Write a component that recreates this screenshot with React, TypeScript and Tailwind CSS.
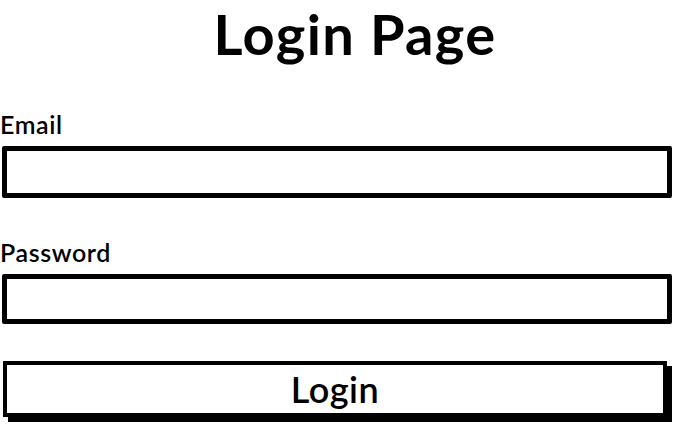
const font = { fontFamily: 'Lato, "Noto Sans", sans-serif' };

export default function App() {
  return (
    <div className="w-[674px] h-[424px] bg-white text-black overflow-hidden" style={font}>
      <h1 className="pl-[36px] text-center text-[56px] font-bold leading-[68px] tracking-[1.3px]">Login Page</h1>

      <form className="mt-[42px] flex flex-col" onSubmit={(e) => e.preventDefault()}>
        <label className="block text-[25px] font-semibold leading-[28px] tracking-[0.6px]">Email</label>
        <input
          type="email"
          className="mt-[8px] ml-[2px] h-[52px] w-[670px] rounded-[2px] border-[5px] border-black outline-none"
        />

        <label className="mt-[40px] block text-[25px] font-semibold leading-[28px] tracking-[0.6px]">Password</label>
        <input
          type="password"
          className="mt-[8px] ml-[2px] h-[50px] w-[670px] rounded-[2px] border-[5px] border-black outline-none"
        />

        <button
          type="submit"
          className="mt-[37px] ml-[3px] flex h-[56px] w-[664px] items-center justify-center border-[4px] border-black bg-white text-[36px] font-semibold leading-none tracking-[0.5px] shadow-[5px_5px_0_#000]"
        >
          Login
        </button>
      </form>
    </div>
  );
}
